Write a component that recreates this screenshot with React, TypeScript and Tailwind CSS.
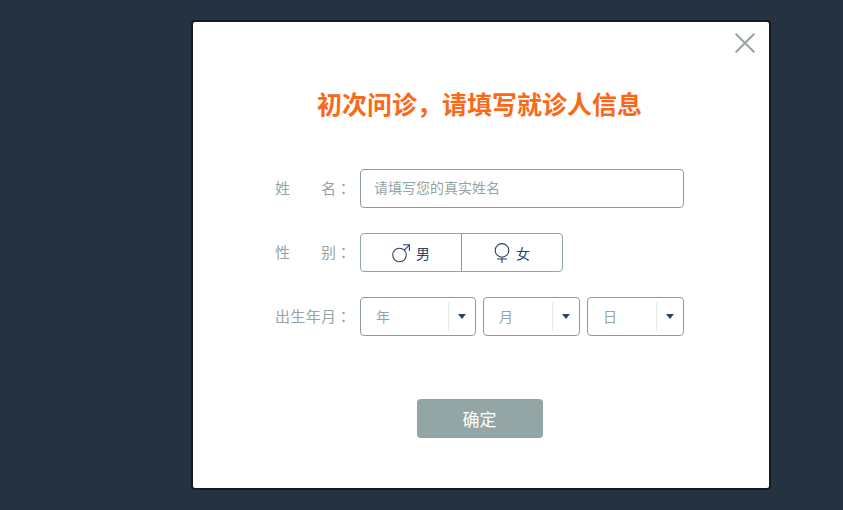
import { useState } from "react";

// ─── DATA ────────────────────────────────────────────────────────────
const range = (from: number, to: number) =>
  Array.from({ length: to - from + 1 }, (_, i) => from + i);

const birthFields = [
  { id: "year", title: "年", width: "flex-[116_1_0%]", options: range(1930, 2016).reverse() },
  { id: "month", title: "月", width: "flex-[97_1_0%]", options: range(1, 12) },
  { id: "day", title: "日", width: "flex-[97_1_0%]", options: range(1, 31) },
];

const genders = [
  { id: "male", title: "男", Icon: MaleIcon },
  { id: "female", title: "女", Icon: FemaleIcon },
];

// ─── ICONS ───────────────────────────────────────────────────────────
function MaleIcon() {
  return (
    <svg width="18" height="20" viewBox="0 0 18 20" fill="none" stroke="currentColor" strokeWidth="1.1" aria-hidden="true">
      <circle cx="7.5" cy="12" r="6.8" />
      <path d="M12.3 7.2L17.2 2.2M11 1.8H17.4V8" />
    </svg>
  );
}

function FemaleIcon() {
  return (
    <svg width="16" height="20" viewBox="0 0 16 20" fill="none" stroke="currentColor" strokeWidth="1.1" aria-hidden="true">
      <circle cx="8" cy="7.4" r="6.8" />
      <path d="M8 14.2V20M3 16H13" />
    </svg>
  );
}

function CloseIcon() {
  return (
    <svg width="20" height="20" viewBox="0 0 20 20" fill="none" stroke="currentColor" strokeWidth="2" aria-hidden="true">
      <path d="M0.7 0.7L19.3 19.3M19.3 0.7L0.7 19.3" />
    </svg>
  );
}

// Label characters spread over a four-character column, colon after it
function LabelText({ text }: { text: string }) {
  return (
    <>
      <span className="flex w-[61px] justify-between">
        {text.split("").map((c) => (
          <span key={c}>{c}</span>
        ))}
      </span>
      <span className="font-['Noto_Sans_CJK_TC',sans-serif]">：</span>
    </>
  );
}

const labelClass = "flex w-[85px] shrink-0 text-[15px] text-[#93a5a5]";

export default function App() {
  const [gender, setGender] = useState("");

  return (
    <main
      lang="zh-CN"
      className="flex min-h-screen items-start justify-end bg-[#253241] py-5 pl-5 pr-[72px] font-['Noto_Sans_CJK_SC',sans-serif]"
    >
      <section
        role="dialog"
        aria-labelledby="dialog-title"
        className="w-full max-w-[580px] rounded-[4px] border-2 border-[#171b1d] bg-white pb-[50px] pr-[3px]"
      >
        {/* ── Close ── */}
        <div className="flex justify-end pr-[11px] pt-[11px]">
          <button type="button" aria-label="关闭" className="cursor-pointer text-[#93a5a5]">
            <CloseIcon />
          </button>
        </div>

        <h1 id="dialog-title" className="mt-[31px] text-center text-[25px] leading-[38px] font-bold text-[#fb6816]">
          初次问诊，请填写就诊人信息
        </h1>

        <form className="mx-auto mt-[47px] flex max-w-[409px] flex-col gap-[25px]" onSubmit={(e) => e.preventDefault()}>
          {/* ── Name ── */}
          <div className="flex items-center">
            <label htmlFor="name" className={labelClass}>
              <LabelText text="姓名" />
            </label>
            <input
              id="name"
              type="text"
              placeholder="请填写您的真实姓名"
              className="h-[39px] w-full min-w-0 rounded border border-[#8b9b9b] px-[13px] pb-1 text-sm text-[#2b4361] outline-none placeholder:text-[#93a5a5]"
            />
          </div>

          {/* ── Gender ── */}
          <div role="radiogroup" aria-labelledby="gender-label" className="flex items-center">
            <span id="gender-label" className={labelClass}>
              <LabelText text="性别" />
            </span>
            <div className="flex h-[39px] w-[203px] divide-x divide-[#8b9b9b] rounded border border-[#93a5a5]">
              {genders.map(({ id, title, Icon }) => (
                <label
                  key={id}
                  className="relative flex flex-1 cursor-pointer items-center justify-center gap-1.5 text-sm text-[#2b4361] has-checked:bg-[#eef2f2]"
                >
                  <input
                    type="radio"
                    name="gender"
                    value={id}
                    checked={gender === id}
                    onChange={() => setGender(id)}
                    className="sr-only"
                  />
                  <Icon />
                  {title}
                </label>
              ))}
            </div>
          </div>

          {/* ── Birth date ── */}
          <div role="group" aria-labelledby="birth-label" className="flex items-center">
            <span id="birth-label" className={labelClass}>
              <LabelText text="出生年月" />
            </span>
            <div className="flex min-w-0 flex-1 gap-[7px]">
              {birthFields.map((f) => (
                <div key={f.id} className={`relative min-w-0 ${f.width}`}>
                  <select
                    id={f.id}
                    aria-label={f.title}
                    defaultValue=""
                    className="block h-[39px] w-full appearance-none rounded border border-[#8b9b9b] bg-white pb-0.5 pl-[15px] pr-8 text-sm text-[#93a5a5] outline-none"
                  >
                    <option value="">{f.title}</option>
                    {f.options.map((o) => (
                      <option key={o} value={o}>
                        {o}
                      </option>
                    ))}
                  </select>
                  <span className="pointer-events-none absolute inset-y-[5px] right-0 flex w-7 items-center justify-center border-l border-[#e8ecec] pr-0.5 text-[#2b4361]">
                    <svg width="8" height="5" viewBox="0 0 8 5" fill="currentColor" aria-hidden="true">
                      <path d="M0 0H8L4 5Z" />
                    </svg>
                  </span>
                </div>
              ))}
            </div>
          </div>

          <button
            type="submit"
            className="mx-auto mt-[38px] h-[39px] w-[126px] cursor-pointer rounded bg-[#93a5a5] text-[17px] text-white"
          >
            确定
          </button>
        </form>
      </section>
    </main>
  );
}
